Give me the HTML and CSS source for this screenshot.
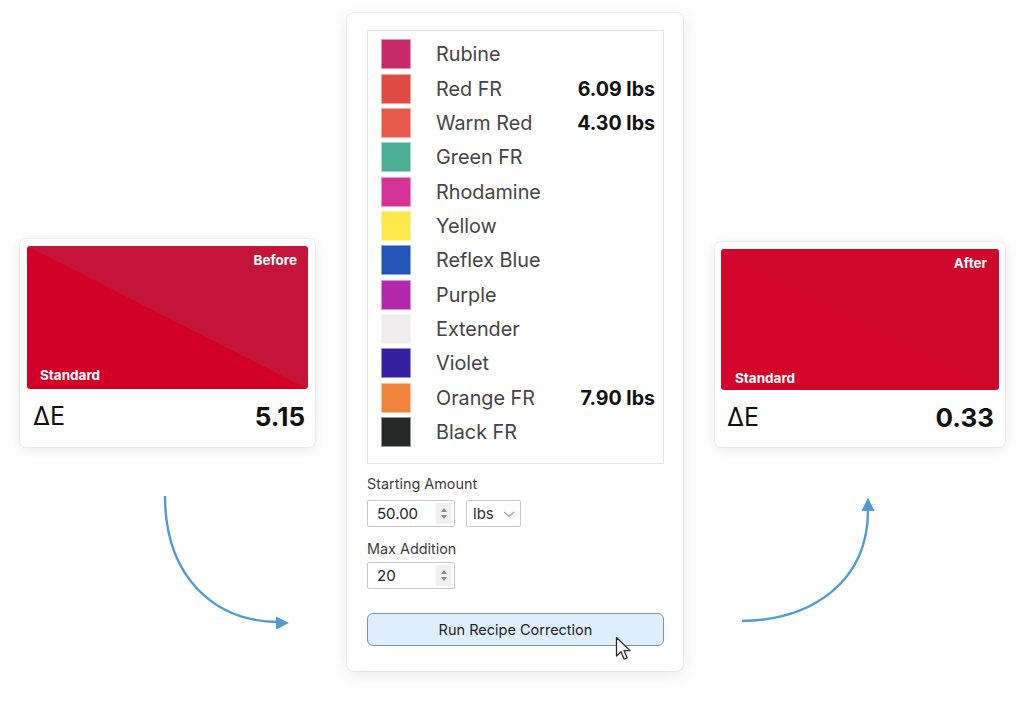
FILE: index.html
```html
<!DOCTYPE html>
<html>
<head>
<meta charset="utf-8">
<link rel="stylesheet" href="styles.css">
</head>
<body>
<div class="stage">
  <div class="card card-before">
    <div class="sample sample-before">
      <span class="tag tag-top">Before</span>
      <span class="tag tag-bottom">Standard</span>
    </div>
    <div class="delta"><span class="de">ΔE</span><span class="val">5.15</span></div>
  </div>

  <div class="panel">
    <div class="inks">
      <div class="ink"><span class="sw" style="background:#c82a6a"></span><span class="name">Rubine</span><span class="amt"></span></div>
      <div class="ink"><span class="sw" style="background:#e04b46"></span><span class="name">Red FR</span><span class="amt">6.09 lbs</span></div>
      <div class="ink"><span class="sw" style="background:#e85a4a"></span><span class="name">Warm Red</span><span class="amt">4.30 lbs</span></div>
      <div class="ink"><span class="sw" style="background:#4caf93"></span><span class="name">Green FR</span><span class="amt"></span></div>
      <div class="ink"><span class="sw" style="background:#d6339a"></span><span class="name">Rhodamine</span><span class="amt"></span></div>
      <div class="ink"><span class="sw" style="background:#fce84a"></span><span class="name">Yellow</span><span class="amt"></span></div>
      <div class="ink"><span class="sw" style="background:#2255b8"></span><span class="name">Reflex Blue</span><span class="amt"></span></div>
      <div class="ink"><span class="sw" style="background:#b228a8"></span><span class="name">Purple</span><span class="amt"></span></div>
      <div class="ink"><span class="sw" style="background:#eeeced"></span><span class="name">Extender</span><span class="amt"></span></div>
      <div class="ink"><span class="sw" style="background:#3420a0"></span><span class="name">Violet</span><span class="amt"></span></div>
      <div class="ink"><span class="sw" style="background:#f0843c"></span><span class="name">Orange FR</span><span class="amt">7.90 lbs</span></div>
      <div class="ink"><span class="sw" style="background:#262828"></span><span class="name">Black FR</span><span class="amt"></span></div>
    </div>

    <div class="field-label">Starting Amount</div>
    <div class="field-row">
      <div class="num"><span class="num-val">50.00</span><span class="spin"><i class="up"></i><i class="down"></i></span></div>
      <div class="select"><span>lbs</span>
        <svg class="chev" width="12" height="7" viewBox="0 0 12 7"><path d="M1 1 L6 5.5 L11 1" fill="none" stroke="#a0a0a0" stroke-width="1.1"/></svg>
      </div>
    </div>
    <div class="field-label label2">Max Addition</div>
    <div class="field-row row2">
      <div class="num"><span class="num-val">20</span><span class="spin"><i class="up"></i><i class="down"></i></span></div>
    </div>

    <div class="btn">Run Recipe Correction
      <svg class="cursor" width="18" height="26" viewBox="0 0 18 26">
        <path d="M1.5 1.5 L1.5 20 L6 15.8 L9.2 23.2 L12.2 21.9 L9.1 14.7 L15 14.6 Z" fill="#fff" stroke="#2a2a2a" stroke-width="1.3" stroke-linejoin="round"/>
      </svg>
    </div>
  </div>

  <div class="card card-after">
    <div class="sample sample-after">
      <span class="tag tag-top">After</span>
      <span class="tag tag-bottom">Standard</span>
    </div>
    <div class="delta"><span class="de">ΔE</span><span class="val">0.33</span></div>
  </div>

  <svg class="arrows" width="1024" height="703" viewBox="0 0 1024 703">
    <path d="M165 496 C 165 575, 212 621, 278 622" fill="none" stroke="#4f9bd2" stroke-width="2.4"/>
    <path d="M276 616.5 L289 623 L276 629.5 Z" fill="#4f9bd2"/>
    <path d="M742 621 C 812 620, 868 582, 868 510" fill="none" stroke="#4f9bd2" stroke-width="2.4"/>
    <path d="M861.5 511 L868 497.5 L874.5 511 Z" fill="#4f9bd2"/>
  </svg>
</div>
</body>
</html>
```

FILE: styles.css
```css
* { box-sizing: border-box; }
html, body { margin: 0; padding: 0; background: #fff; }
body { font-family: Inter, "Noto Sans", "Liberation Sans", sans-serif; color: #222; }

.stage {
  position: relative;
  width: 1024px;
  height: 703px;
  display: flex;
  align-items: flex-start;
  gap: 32px;
  padding-left: 20px;
}

.card {
  background: #fff;
  border-radius: 6px;
  box-shadow: 0 2px 12px rgba(0,0,0,0.10), 0 0 0 1px rgba(0,0,0,0.04);
}
.card-before { width: 295px; height: 208px; margin-top: 239px; padding: 7px; }
.card-after { width: 290px; height: 205px; margin-top: 242px; padding: 7px 6px; }

.sample {
  position: relative;
  border-radius: 3px;
  display: flex;
  flex-direction: column;
  justify-content: space-between;
  color: #fff;
  font-weight: 700;
  font-size: 13.5px;
}
.sample-before {
  height: 143px;
  background: linear-gradient(to top right, #d20028 calc(50% - 0.5px), #c41439 calc(50% + 0.5px));
  padding: 6px 11px 6px 13px;
}
.sample-after {
  height: 141px;
  background: linear-gradient(to top right, #d2062a 50%, #d0072c 50%);
  padding: 6px 12px 4px 14px;
}
.tag-top { align-self: flex-end; }
.tag-bottom { align-self: flex-start; }

.delta {
  display: flex;
  justify-content: space-between;
  align-items: center;
  height: 54px;
  color: #111;
}
.card-before .delta { padding: 0 3px 0 6px; }
.card-after .delta { padding: 0 5px 0 6px; }
.de { font-weight: 400; font-size: 25px; }
.val { font-weight: 700; font-size: 26px; }

.panel {
  width: 336px;
  height: 658px;
  margin-top: 13px;
  background: #fff;
  border-radius: 7px;
  box-shadow: 0 3px 16px rgba(0,0,0,0.10), 0 0 0 1px rgba(0,0,0,0.05);
  padding: 17px 19px 0 20px;
}

.inks {
  border: 1px solid #e6e6e6;
  height: 434px;
  padding: 6px 8px 0 13px;
}
.ink {
  display: grid;
  grid-template-columns: 30px 1fr auto;
  align-items: center;
  height: 34.35px;
}
.sw {
  width: 30px;
  height: 30px;
  border: 1px solid rgba(255,255,255,0.5);
}
.name {
  padding-left: 25px;
  font-size: 19.8px;
  color: #444;
}
.amt {
  font-size: 19.6px;
  font-weight: 700;
  color: #111;
}

.field-label {
  margin-top: 11px;
  font-size: 14.4px;
  color: #3c3c3c;
  height: 18px;
  line-height: 18px;
}
.label2 { margin-top: 13px; }
.field-row {
  display: flex;
  gap: 11px;
  margin-top: 7px;
}
.row2 { margin-top: 4px; }
.num {
  width: 88px;
  height: 27px;
  border: 1px solid #c9c9c9;
  border-radius: 2px;
  display: flex;
  align-items: center;
  justify-content: space-between;
  padding: 0 2px 0 9px;
  font-size: 15px;
  color: #222;
}
.spin {
  width: 16px;
  height: 21px;
  background: #f0f0f0;
  display: flex;
  flex-direction: column;
  align-items: center;
  justify-content: center;
  gap: 3px;
}
.spin i {
  width: 0; height: 0;
  border-left: 3.5px solid transparent;
  border-right: 3.5px solid transparent;
}
.spin .up { border-bottom: 4px solid #8a8a8a; }
.spin .down { border-top: 4px solid #8a8a8a; }

.select {
  width: 55px;
  height: 27px;
  border: 1px solid #c9c9c9;
  border-radius: 2px;
  display: flex;
  align-items: center;
  justify-content: space-between;
  padding: 0 5px 0 6px;
  font-size: 15px;
  color: #333;
}
.chev { margin-top: 1px; }

.btn {
  position: relative;
  margin-top: 24px;
  height: 33px;
  border: 1.5px solid #7895b4;
  border-radius: 6px;
  background: #dfeefd;
  display: flex;
  align-items: center;
  justify-content: center;
  font-size: 14.5px;
  color: #222;
}
.cursor {
  position: absolute;
  left: 247px;
  top: 22px;
}

.arrows {
  position: absolute;
  left: 0;
  top: 0;
  pointer-events: none;
}
```
